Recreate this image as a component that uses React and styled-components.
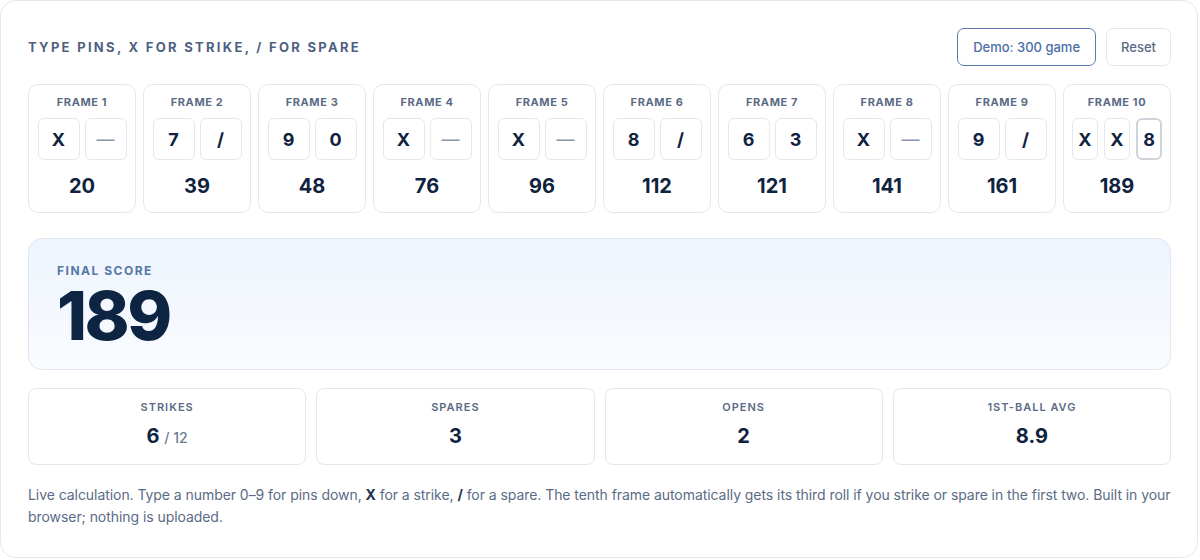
import React from "react";
import styled, { createGlobalStyle } from "styled-components";

const Global = createGlobalStyle`
  html, body { margin: 0; padding: 0; background: #ffffff; }
  body { font-family: Inter, "Noto Sans", sans-serif; -webkit-font-smoothing: antialiased; }
  * { box-sizing: border-box; }
`;

const Card = styled.div`
  width: 1198px;
  height: 558px;
  border: 1px solid #e2e8f0;
  border-radius: 16px;
  background: #fff;
  padding: 27px 26px 0 27px;
  display: flex;
  flex-direction: column;
`;

const Header = styled.div`
  display: flex;
  align-items: center;
  justify-content: space-between;
  height: 38px;
`;

const Title = styled.div`
  font-size: 13px;
  font-weight: 700;
  letter-spacing: 2.3px;
  color: #4f6180;
`;

const Actions = styled.div`
  display: flex;
  gap: 10px;
`;

const Button = styled.button`
  font-family: inherit;
  font-size: 13px;
  font-weight: 500;
  height: 38px;
  padding: 0 ${(p) => (p.$primary ? "15px" : "14px")};
  border-radius: 7px;
  background: #fff;
  cursor: pointer;
  border: 1px solid ${(p) => (p.$primary ? "#5a7bb0" : "#e2e8f0")};
  color: ${(p) => (p.$primary ? "#4b6ea6" : "#5a6b85")};
`;

const Frames = styled.div`
  display: grid;
  grid-template-columns: repeat(10, 1fr);
  gap: 7px;
  margin-top: 18px;
`;

const Frame = styled.div`
  border: 1px solid #e2e8f0;
  border-radius: 10px;
  height: 129px;
  display: flex;
  flex-direction: column;
  align-items: center;
  padding-top: 10px;
`;

const FrameLabel = styled.div`
  font-size: 11px;
  line-height: 14px;
  font-weight: 700;
  letter-spacing: 0.6px;
  color: #5b6b85;
`;

const Rolls = styled.div`
  display: flex;
  gap: ${(p) => (p.$three ? "6px" : "5px")};
  margin-top: 9px;
`;

const Roll = styled.div`
  width: ${(p) => (p.$narrow ? "26px" : "42px")};
  height: 42px;
  border: ${(p) => (p.$focus ? "2px solid #cfd4da" : "1px solid #e2e8f0")};
  border-radius: 6px;
  display: flex;
  align-items: center;
  justify-content: center;
  font-size: 18px;
  font-weight: ${(p) => (p.$empty ? 400 : 700)};
  color: ${(p) => (p.$empty ? "#8796ac" : "#0f2340")};
`;

const FrameScore = styled.div`
  margin-top: 13px;
  font-size: 20px;
  line-height: 26px;
  font-weight: 700;
  color: #0f2340;
`;

const Final = styled.div`
  margin-top: 25px;
  height: 132px;
  border: 1px solid #dfe7f1;
  border-radius: 14px;
  background: linear-gradient(180deg, #eef5fd 0%, #f9fbff 100%);
  padding: 24px 28px 0;
`;

const FinalLabel = styled.div`
  font-size: 12px;
  line-height: 16px;
  font-weight: 700;
  letter-spacing: 1.5px;
  color: #5677a6;
`;

const FinalValue = styled.div`
  margin-top: 0;
  font-size: 68px;
  line-height: 72px;
  font-weight: 800;
  letter-spacing: -2.5px;
  color: #0d2542;
`;

const Stats = styled.div`
  display: grid;
  grid-template-columns: repeat(4, 1fr);
  gap: 10px;
  margin-top: 18px;
`;

const Stat = styled.div`
  height: 77px;
  border: 1px solid #e2e8f0;
  border-radius: 8px;
  display: flex;
  flex-direction: column;
  align-items: center;
  padding-top: 11px;
`;

const StatLabel = styled.div`
  font-size: 11px;
  line-height: 14px;
  font-weight: 600;
  letter-spacing: 1px;
  color: #5b6b85;
`;

const StatValue = styled.div`
  margin-top: 9px;
  font-size: 20px;
  line-height: 26px;
  font-weight: 700;
  color: #0f2340;
`;

const StatSub = styled.span`
  font-size: 14px;
  font-weight: 500;
  color: #6b7b93;
`;

const Note = styled.p`
  margin: 19px 0 0;
  font-size: 14px;
  line-height: 22px;
  letter-spacing: -0.06px;
  color: #5b6b85;
  b { color: #24344f; font-weight: 700; }
`;

const frames = [
  { r: ["X", "—"], s: 20 },
  { r: ["7", "/"], s: 39 },
  { r: ["9", "0"], s: 48 },
  { r: ["X", "—"], s: 76 },
  { r: ["X", "—"], s: 96 },
  { r: ["8", "/"], s: 112 },
  { r: ["6", "3"], s: 121 },
  { r: ["X", "—"], s: 141 },
  { r: ["9", "/"], s: 161 },
  { r: ["X", "X", "8"], s: 189 },
];

export default function App() {
  return (
    <>
      <Global />
      <Card>
        <Header>
          <Title>TYPE PINS, X FOR STRIKE, / FOR SPARE</Title>
          <Actions>
            <Button $primary>Demo: 300 game</Button>
            <Button>Reset</Button>
          </Actions>
        </Header>
        <Frames>
          {frames.map((f, i) => {
            const three = f.r.length === 3;
            return (
              <Frame key={i}>
                <FrameLabel>FRAME {i + 1}</FrameLabel>
                <Rolls $three={three}>
                  {f.r.map((v, j) => (
                    <Roll
                      key={j}
                      $narrow={three}
                      $empty={v === "—"}
                      $focus={three && j === 2}
                    >
                      {v}
                    </Roll>
                  ))}
                </Rolls>
                <FrameScore>{f.s}</FrameScore>
              </Frame>
            );
          })}
        </Frames>
        <Final>
          <FinalLabel>FINAL SCORE</FinalLabel>
          <FinalValue>189</FinalValue>
        </Final>
        <Stats>
          <Stat>
            <StatLabel>STRIKES</StatLabel>
            <StatValue>
              6 <StatSub>/ 12</StatSub>
            </StatValue>
          </Stat>
          <Stat>
            <StatLabel>SPARES</StatLabel>
            <StatValue>3</StatValue>
          </Stat>
          <Stat>
            <StatLabel>OPENS</StatLabel>
            <StatValue>2</StatValue>
          </Stat>
          <Stat>
            <StatLabel>1ST-BALL AVG</StatLabel>
            <StatValue>8.9</StatValue>
          </Stat>
        </Stats>
        <Note>
          Live calculation. Type a number 0–9 for pins down, <b>X</b> for a strike, <b>/</b> for a spare. The tenth frame automatically gets its third roll if you strike or spare in the first two. Built in your browser; nothing is uploaded.
        </Note>
      </Card>
    </>
  );
}
